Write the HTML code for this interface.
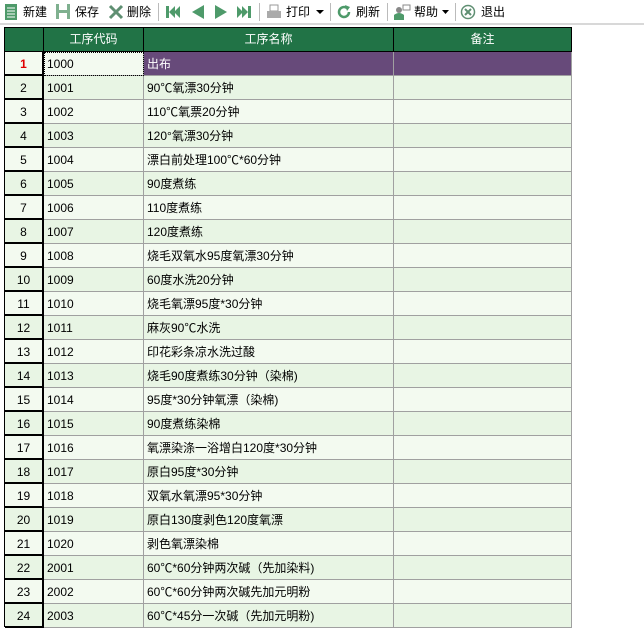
<!DOCTYPE html><html><head><meta charset="utf-8"><style>
*{margin:0;padding:0;box-sizing:border-box}
body{width:644px;height:627px;overflow:hidden;background:#fff;font-family:"Liberation Sans","Noto Sans CJK SC",sans-serif;font-size:12px;color:#000;position:relative}
.tb{position:absolute;top:0;left:0;width:644px;height:25px;background:#fff;border-bottom:2px solid #d8d8d8}
.t{position:absolute;top:4px;font-size:12px;line-height:16px}
.sep{position:absolute;top:3px;width:1px;height:18px;background:#bbb}
svg{position:absolute}
.grid{position:absolute;left:4px;top:27px;width:567px;height:600px;border-left:1px solid #000}
.hd{position:absolute;top:0;height:25px;background:#217346;color:#fff;text-align:center;line-height:23px;border-right:1px solid #000;border-top:1px solid #000;border-bottom:1px solid #000}
.r{position:absolute;left:0;width:567px;height:24px}
.c{position:absolute;top:0;height:24px;line-height:24px;padding-left:3px;border-right:1px solid #a0a0a0;border-bottom:1px solid #a0a0a0;white-space:nowrap;overflow:hidden}
.n{left:0;width:39px;text-align:center;padding:0;border-right:2px solid #000;border-bottom:2px solid #000}
.a{left:39px;width:100px}.b{left:139px;width:250px}.d{left:389px;width:178px}
</style></head><body>
<div class="tb">
<svg style="left:4px;top:3px" width="14" height="18"><rect x="1" y="1" width="12" height="16" fill="#4e9a6a"/><g stroke="#fff" stroke-width="1"><line x1="3" y1="5" x2="11" y2="5"/><line x1="3" y1="8" x2="11" y2="8"/><line x1="3" y1="11" x2="11" y2="11"/><line x1="3" y1="14" x2="11" y2="14"/></g></svg>
<span class="t" style="left:23px">新建</span>
<svg style="left:55px;top:3px" width="16" height="17"><rect x="1" y="1" width="14" height="15" fill="#7fb08f"/><rect x="4" y="1" width="8" height="6" fill="#fff"/><rect x="4" y="10" width="8" height="6" fill="#fff"/></svg>
<span class="t" style="left:75px">保存</span>
<svg style="left:108px;top:4px" width="16" height="16"><path d="M2 2L14 14M14 2L2 14" stroke="#5f8f72" stroke-width="3"/></svg>
<span class="t" style="left:127px">删除</span>
<div class="sep" style="left:158px"></div>
<svg style="left:165px;top:5px" width="16" height="14"><rect x="1" y="1" width="3" height="12" fill="#4e9a6a"/><path d="M4 7L10 1V13Z M9 7L15 1V13Z" fill="#4e9a6a"/></svg>
<svg style="left:191px;top:4px" width="14" height="16"><path d="M1 8L13 1V15Z" fill="#4e9a6a"/></svg>
<svg style="left:214px;top:4px" width="14" height="16"><path d="M13 8L1 1V15Z" fill="#4e9a6a"/></svg>
<svg style="left:236px;top:5px" width="16" height="14"><rect x="12" y="1" width="3" height="12" fill="#4e9a6a"/><path d="M12 7L6 1V13Z M7 7L1 1V13Z" fill="#4e9a6a"/></svg>
<div class="sep" style="left:259px"></div>
<svg style="left:266px;top:4px" width="16" height="16"><rect x="4" y="1" width="8" height="6" fill="#fff" stroke="#999"/><rect x="1" y="7" width="14" height="7" fill="#aaa"/></svg>
<span class="t" style="left:286px">打印</span>
<svg style="left:316px;top:10px" width="8" height="5"><path d="M0 0H8L4 4Z" fill="#000"/></svg>
<div class="sep" style="left:330px"></div>
<svg style="left:336px;top:4px" width="16" height="16"><path d="M13 8A5 5 0 1 1 11 4" fill="none" stroke="#4e9a6a" stroke-width="2.5"/><path d="M9 1L14 3L11 7Z" fill="#4e9a6a"/></svg>
<span class="t" style="left:356px">刷新</span>
<div class="sep" style="left:387px"></div>
<svg style="left:393px;top:4px" width="18" height="16"><circle cx="6" cy="6" r="3" fill="#888"/><path d="M1 16V11Q6 7 11 11V16Z" fill="#4e9a6a"/><rect x="10" y="1" width="7" height="5" fill="none" stroke="#888"/></svg>
<span class="t" style="left:414px">帮助</span>
<svg style="left:442px;top:10px" width="7" height="4"><path d="M0 0H7L3.5 4Z" fill="#000"/></svg>
<div class="sep" style="left:455px"></div>
<svg style="left:460px;top:4px" width="16" height="16"><circle cx="8" cy="8" r="6.5" fill="none" stroke="#5f8f72" stroke-width="1.5"/><path d="M5 5L11 11M11 5L5 11" stroke="#5f8f72" stroke-width="2"/></svg>
<span class="t" style="left:481px">退出</span>
</div>
<div class="grid">
<div class="hd" style="left:0;width:39px"></div>
<div class="hd" style="left:39px;width:100px">工序代码</div>
<div class="hd" style="left:139px;width:250px">工序名称</div>
<div class="hd" style="left:389px;width:178px">备注</div>
<div id="rows"></div>
</div>
<script>
var d=[["1000","出布"],["1001","90℃氧漂30分钟"],["1002","110℃氧票20分钟"],["1003","120°氧漂30分钟"],["1004","漂白前处理100℃*60分钟"],["1005","90度煮练"],["1006","110度煮练"],["1007","120度煮练"],["1008","烧毛双氧水95度氧漂30分钟"],["1009","60度水洗20分钟"],["1010","烧毛氧漂95度*30分钟"],["1011","麻灰90℃水洗"],["1012","印花彩条凉水洗过酸"],["1013","烧毛90度煮练30分钟（染棉)"],["1014","95度*30分钟氧漂（染棉)"],["1015","90度煮练染棉"],["1016","氧漂染涤一浴增白120度*30分钟"],["1017","原白95度*30分钟"],["1018","双氧水氧漂95*30分钟"],["1019","原白130度剥色120度氧漂"],["1020","剥色氧漂染棉"],["2001","60℃*60分钟两次碱（先加染料)"],["2002","60℃*60分钟两次碱先加元明粉"],["2003","60℃*45分一次碱（先加元明粉)"]];
var h="";d.forEach(function(r,i){var bg=i%2?"#e8f5e4":"#f3faf0";
if(i==0){h+='<div class="r" style="top:25px"><div class="c n" style="background:'+bg+';color:#e00000;font-weight:bold">1</div><div class="c a" style="background:#f3faf0;outline:1px dotted #000;outline-offset:-1px">1000</div><div class="c b" style="background:#674a7a;color:#fff">出布</div><div class="c d" style="background:#674a7a"></div></div>';return;}
h+='<div class="r" style="top:'+(25+i*24)+'px;background:'+bg+'"><div class="c n">'+(i+1)+'</div><div class="c a">'+r[0]+'</div><div class="c b">'+r[1]+'</div><div class="c d"></div></div>';});
document.getElementById("rows").innerHTML=h;
</script>
</body></html>
